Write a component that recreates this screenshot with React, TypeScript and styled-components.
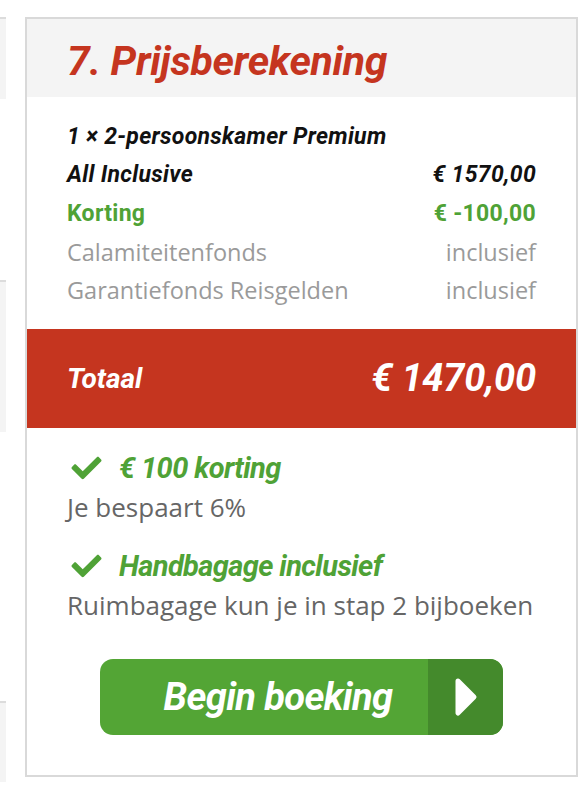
import React from "react";
import styled, { createGlobalStyle } from "styled-components";
import { FaCheck } from "react-icons/fa";

const GlobalStyle = createGlobalStyle`
  body {
    margin: 0;
    background: #ffffff;
    font-family: "Open Sans", "Liberation Sans", sans-serif;
  }
`;

const Page = styled.div`
  display: flex;
  gap: 19px;
  padding-top: 17px;
  width: 588px;
  height: 792px;
  box-sizing: border-box;
  overflow: hidden;
`;

const SideColumn = styled.div`
  width: 6px;
  display: flex;
  flex-direction: column;
`;

const SideBlock = styled.div<{ $top: number; $height: number }>`
  margin-top: ${(p) => p.$top}px;
  height: ${(p) => p.$height}px;
  background: #f4f4f4;
  border-top: 2px solid #dcdcdc;
`;

const Panel = styled.section`
  width: 553px;
  height: 760px;
  box-sizing: border-box;
  border: 2px solid #d9d9d9;
  display: flex;
  flex-direction: column;
`;

const Header = styled.header`
  height: 78px;
  box-sizing: border-box;
  background: #f4f4f4;
  display: flex;
  align-items: center;
  padding: 6px 40px 0;
`;

const Title = styled.h2`
  margin: 0;
  font-family: "Roboto", "Liberation Sans", sans-serif;
  font-style: italic;
  font-weight: 700;
  font-size: 41px;
  letter-spacing: -0.3px;
  color: #c5351f;
`;

const Lines = styled.div`
  padding: 20px 40px 19px;
`;

type Tone = "dark" | "green" | "muted";

const Line = styled.div<{ $tone: Tone }>`
  display: flex;
  justify-content: space-between;
  align-items: center;
  height: 38.5px;
  font-family: ${(p) =>
    p.$tone === "muted"
      ? `"Open Sans", "Liberation Sans", sans-serif`
      : `"Roboto", "Liberation Sans", sans-serif`};
  font-style: ${(p) => (p.$tone === "dark" ? "italic" : "normal")};
  font-weight: ${(p) => (p.$tone === "muted" ? 400 : 700)};
  font-size: ${(p) => (p.$tone === "muted" ? "23.5px" : "23px")};
  letter-spacing: ${(p) => (p.$tone === "muted" ? "0" : "0.3px")};
  color: ${(p) =>
    p.$tone === "green" ? "#4fa236" : p.$tone === "muted" ? "#9a9a9a" : "#111111"};
`;

const TotalBar = styled.div`
  height: 99px;
  background: #c5351f;
  display: flex;
  justify-content: space-between;
  align-items: center;
  padding: 0 40px;
  color: #ffffff;
  font-family: "Roboto", "Liberation Sans", sans-serif;
  font-style: italic;
  font-weight: 700;
`;

const TotalLabel = styled.span`
  font-size: 28px;
  letter-spacing: 0;
`;

const TotalAmount = styled.span`
  font-size: 38px;
  letter-spacing: -0.2px;
`;

const Perks = styled.div`
  padding: 20px 40px 0;
  display: flex;
  flex-direction: column;
  gap: 20px;
`;

const Perk = styled.div`
  display: flex;
  flex-direction: column;
`;

const PerkTitle = styled.div`
  display: flex;
  align-items: center;
  gap: 16px;
  height: 40px;
  padding-left: 3px;
  color: #4fa236;
  font-family: "Roboto", "Liberation Sans", sans-serif;
  font-style: italic;
  font-weight: 700;
  font-size: 29px;
  letter-spacing: -0.6px;

  svg {
    width: 33px;
    height: 30px;
  }
`;

const PerkText = styled.div`
  font-size: 26px;
  line-height: 38px;
  color: #666666;
`;

const ButtonRow = styled.div`
  margin-top: auto;
  padding-bottom: 40px;
  display: flex;
  justify-content: center;
`;

const BookButton = styled.button`
  width: 403px;
  height: 76px;
  padding: 0;
  border: none;
  border-radius: 13px;
  overflow: hidden;
  display: flex;
  background: #53a535;
  cursor: pointer;
`;

const ButtonLabel = styled.span`
  flex: 1;
  display: flex;
  align-items: center;
  justify-content: center;
  padding-left: 28px;
  color: #ffffff;
  font-family: "Roboto", "Liberation Sans", sans-serif;
  font-style: italic;
  font-weight: 700;
  font-size: 38px;
  letter-spacing: -0.6px;
`;

const ButtonArrow = styled.span`
  width: 75px;
  background: #448a2c;
  display: flex;
  align-items: center;
  justify-content: center;
`;

const lines: { label: string; value?: string; tone: Tone }[] = [
  { label: "1 × 2-persoonskamer Premium", tone: "dark" },
  { label: "All Inclusive", value: "€ 1570,00", tone: "dark" },
  { label: "Korting", value: "€ -100,00", tone: "green" },
  { label: "Calamiteitenfonds", value: "inclusief", tone: "muted" },
  { label: "Garantiefonds Reisgelden", value: "inclusief", tone: "muted" },
];

const perks = [
  { title: "€ 100 korting", text: "Je bespaart 6%" },
  { title: "Handbagage inclusief", text: "Ruimbagage kun je in stap 2 bijboeken" },
];

export default function App() {
  return (
    <>
      <GlobalStyle />
      <Page>
        <SideColumn>
          <SideBlock $top={0} $height={80} />
          <SideBlock $top={181} $height={150} />
          <SideBlock $top={269} $height={79} />
        </SideColumn>

        <Panel>
          <Header>
            <Title>7. Prijsberekening</Title>
          </Header>

          <Lines>
            {lines.map((l) => (
              <Line key={l.label} $tone={l.tone}>
                <span>{l.label}</span>
                {l.value && <span>{l.value}</span>}
              </Line>
            ))}
          </Lines>

          <TotalBar>
            <TotalLabel>Totaal</TotalLabel>
            <TotalAmount>€ 1470,00</TotalAmount>
          </TotalBar>

          <Perks>
            {perks.map((p) => (
              <Perk key={p.title}>
                <PerkTitle>
                  <FaCheck />
                  <span>{p.title}</span>
                </PerkTitle>
                <PerkText>{p.text}</PerkText>
              </Perk>
            ))}
          </Perks>

          <ButtonRow>
            <BookButton>
              <ButtonLabel>Begin boeking</ButtonLabel>
              <ButtonArrow>
                <svg width="24" height="40" viewBox="0 0 24 40">
                  <path
                    d="M4 4 L20 20 L4 36 Z"
                    fill="#ffffff"
                    stroke="#ffffff"
                    strokeWidth="5"
                    strokeLinejoin="round"
                  />
                </svg>
              </ButtonArrow>
            </BookButton>
          </ButtonRow>
        </Panel>
      </Page>
    </>
  );
}
